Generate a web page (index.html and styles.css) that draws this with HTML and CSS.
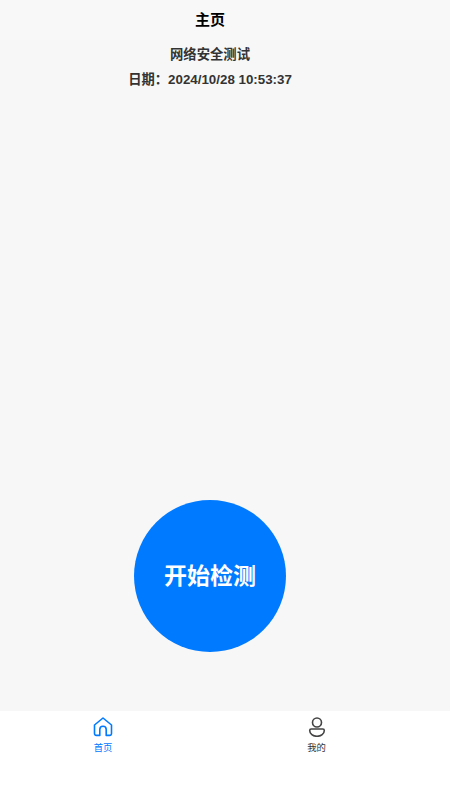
FILE: index.html
```html
<!DOCTYPE html>
<html lang="zh-CN">
<head>
    <meta charset="UTF-8">
    <meta name="viewport" content="width=device-width, initial-scale=1.0">
    <title>主页</title>
    <link rel="stylesheet" href="styles.css">
</head>
<body>

    <div class="app">
        <div class="nav-bar">
            <div class="nav-title">主页</div>
        </div>

        <div class="content">
            <div class="info">
                <div class="info-line">网络安全测试</div>
                <div class="info-line">日期：2024/10/28 10:53:37</div>
            </div>
            <button class="start-button"><span>开始检测</span></button>
        </div>

        <!-- Bottom tabs -->
        <div class="tab-bar">
            <div class="tab tab-active">
                <svg class="tab-icon" viewBox="0 0 20 20" fill="none" stroke="#007aff" stroke-width="1.6" stroke-linejoin="round">
                    <path d="M1.500 8 10 1l8.500 7v8.600a1.800 1.800 0 0 1-1.800 1.800h-3.500v-5.900a3.200 3.200 0 0 0-6.400 0v5.900H3.300a1.800 1.800 0 0 1-1.800-1.800z"/>
                </svg>
                <span>首页</span>
            </div>
            <div class="tab">
                <svg class="tab-icon" viewBox="0 0 20 20" fill="none" stroke="#444" stroke-width="1.6">
                    <circle cx="10" cy="5.500" r="4.500"/>
                    <path d="M4.200 12h11.600a1.500 1.500 0 0 1 1.500 1.500c0 3.300-3.300 5.800-7.300 5.800s-7.300-2.500-7.300-5.800a1.500 1.500 0 0 1 1.500-1.500z" stroke-linejoin="round"/>
                </svg>
                <span>我的</span>
            </div>
        </div>
    </div>

</body>
</html>
```

FILE: styles.css
```css
* {
    box-sizing: border-box;
}

html, body {
    height: 100%;
}

body {
    margin: 0;
    font-family: "Liberation Sans", "Noto Sans CJK SC", sans-serif;
    background-color: #ffffff;
}

.app {
    display: flex;
    flex-direction: column;
    height: 800px;
}

.nav-bar {
    height: 40px;
    padding-right: 30px;
    background-color: #f8f8f8;
}

.nav-title {
    line-height: 40px;
    text-align: center;
    font-size: 15px;
    font-weight: bold;
    color: #000000;
}

.content {
    flex: 1;
    display: flex;
    flex-direction: column;
    justify-content: space-between;
    align-items: center;
    padding-right: 30px;
    padding-bottom: 59px;
    background-color: #f7f7f7;
}

.info {
    padding-top: 2px;
    text-align: center;
}

.info-line {
    height: 25px;
    line-height: 25px;
    font-size: 13.33px;
    font-weight: bold;
    color: #333333;
}

.start-button {
    width: 152px;
    height: 152px;
    padding: 0 0 4px;
    border: none;
    border-radius: 50%;
    background-color: #007aff;
    color: #ffffff;
    font-family: inherit;
    font-size: 23px;
    font-weight: bold;
    cursor: pointer;
}

.tab-bar {
    display: grid;
    grid-template-columns: 206px 221px;
    height: 89px;
    background-color: #ffffff;
}

.tab {
    display: flex;
    flex-direction: column;
    align-items: center;
    padding-top: 6px;
    font-size: 9.33px;
    line-height: 11px;
    color: #333333;
}

.tab-active {
    color: #007aff;
}

.tab-icon {
    width: 20px;
    height: 20px;
    margin-bottom: 6px;
}
```
